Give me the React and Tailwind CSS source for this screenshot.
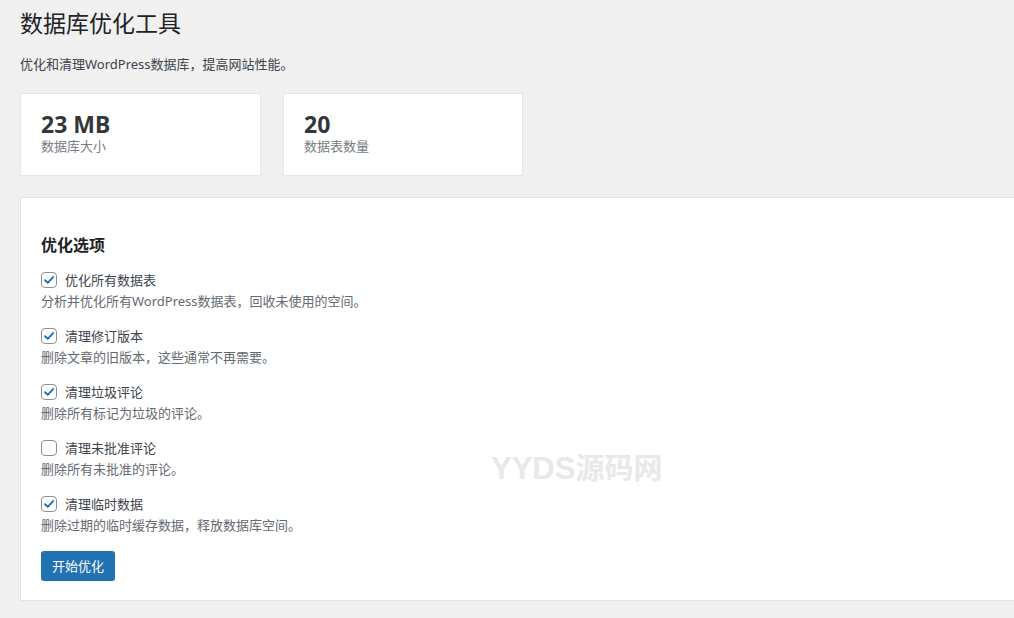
import React from "react";

const font = { fontFamily: '"Noto Sans", "Noto Sans CJK SC", sans-serif' };

const options = [
  { label: "优化所有数据表", desc: "分析并优化所有WordPress数据表，回收未使用的空间。", checked: true },
  { label: "清理修订版本", desc: "删除文章的旧版本，这些通常不再需要。", checked: true },
  { label: "清理垃圾评论", desc: "删除所有标记为垃圾的评论。", checked: true },
  { label: "清理未批准评论", desc: "删除所有未批准的评论。", checked: false },
  { label: "清理临时数据", desc: "删除过期的临时缓存数据，释放数据库空间。", checked: true },
];

function Checkbox({ checked }) {
  return (
    <span className="w-4 h-4 shrink-0 rounded-[4px] border border-[#8c8f94] bg-white flex items-center justify-center">
      {checked && (
        <svg width="14" height="14" viewBox="0 0 16 16">
          <path d="M3.5 8.3 L6.6 11.2 L12.6 4.6" fill="none" stroke="#2271b1" strokeWidth="2.2" strokeLinecap="round" strokeLinejoin="round" />
        </svg>
      )}
    </span>
  );
}

function Stat({ value, label }) {
  return (
    <div className="bg-white border border-[#e6e6e6] pt-[16px] pb-[21px] px-[20px]">
      <div className="text-[23px] leading-[28px] font-bold text-[#32373c]">{value}</div>
      <div className="text-[13px] leading-[16px] text-[#787c82]">{label}</div>
    </div>
  );
}

export default function App() {
  return (
    <div className="min-h-[618px] w-full bg-[#f0f0f1] overflow-hidden" style={font}>
      <div className="pl-[20px] pt-[8px]">
        <h1 className="text-[23px] leading-[30px] font-normal text-[#1d2327]">数据库优化工具</h1>
        <p className="mt-[16px] text-[13px] leading-[20px] text-[#3c434a]">优化和清理WordPress数据库，提高网站性能。</p>
        <div className="mt-[19px] grid grid-cols-[241px_240px] gap-[22px]">
          <Stat value="23 MB" label="数据库大小" />
          <Stat value="20" label="数据表数量" />
        </div>
        <div className="relative mt-[21px] w-[1010px] bg-white border border-[#e3e3e3] pt-[37px] pb-[19px] px-[20px]">
          <h2 className="text-[16px] leading-[20px] font-bold text-[#1d2327]">优化选项</h2>
          <div className="mt-[15px] flex flex-col gap-[15px]">
            {options.map((o) => (
              <div key={o.label}>
                <div className="h-[20px] flex items-center gap-[8px]">
                  <Checkbox checked={o.checked} />
                  <span className="text-[13px] leading-[20px] text-[#3c434a]">{o.label}</span>
                </div>
                <p className="mt-px text-[13px] leading-[20px] text-[#646970]">{o.desc}</p>
              </div>
            ))}
          </div>
          <button className="mt-[16px] h-[30px] px-[11px] rounded-[3px] bg-[#2271b1] text-white text-[13px] leading-[28px]">
            开始优化
          </button>
          <div
            className="absolute left-[470px] top-[254px] flex items-baseline font-bold text-[#e8e8e8] select-none leading-[34px]"
            style={{ fontFamily: '"Liberation Sans", "Noto Sans CJK SC", sans-serif' }}
          >
            <span className="text-[31px]">YYDS</span>
            <span className="text-[29px]">源码网</span>
          </div>
        </div>
      </div>
    </div>
  );
}
